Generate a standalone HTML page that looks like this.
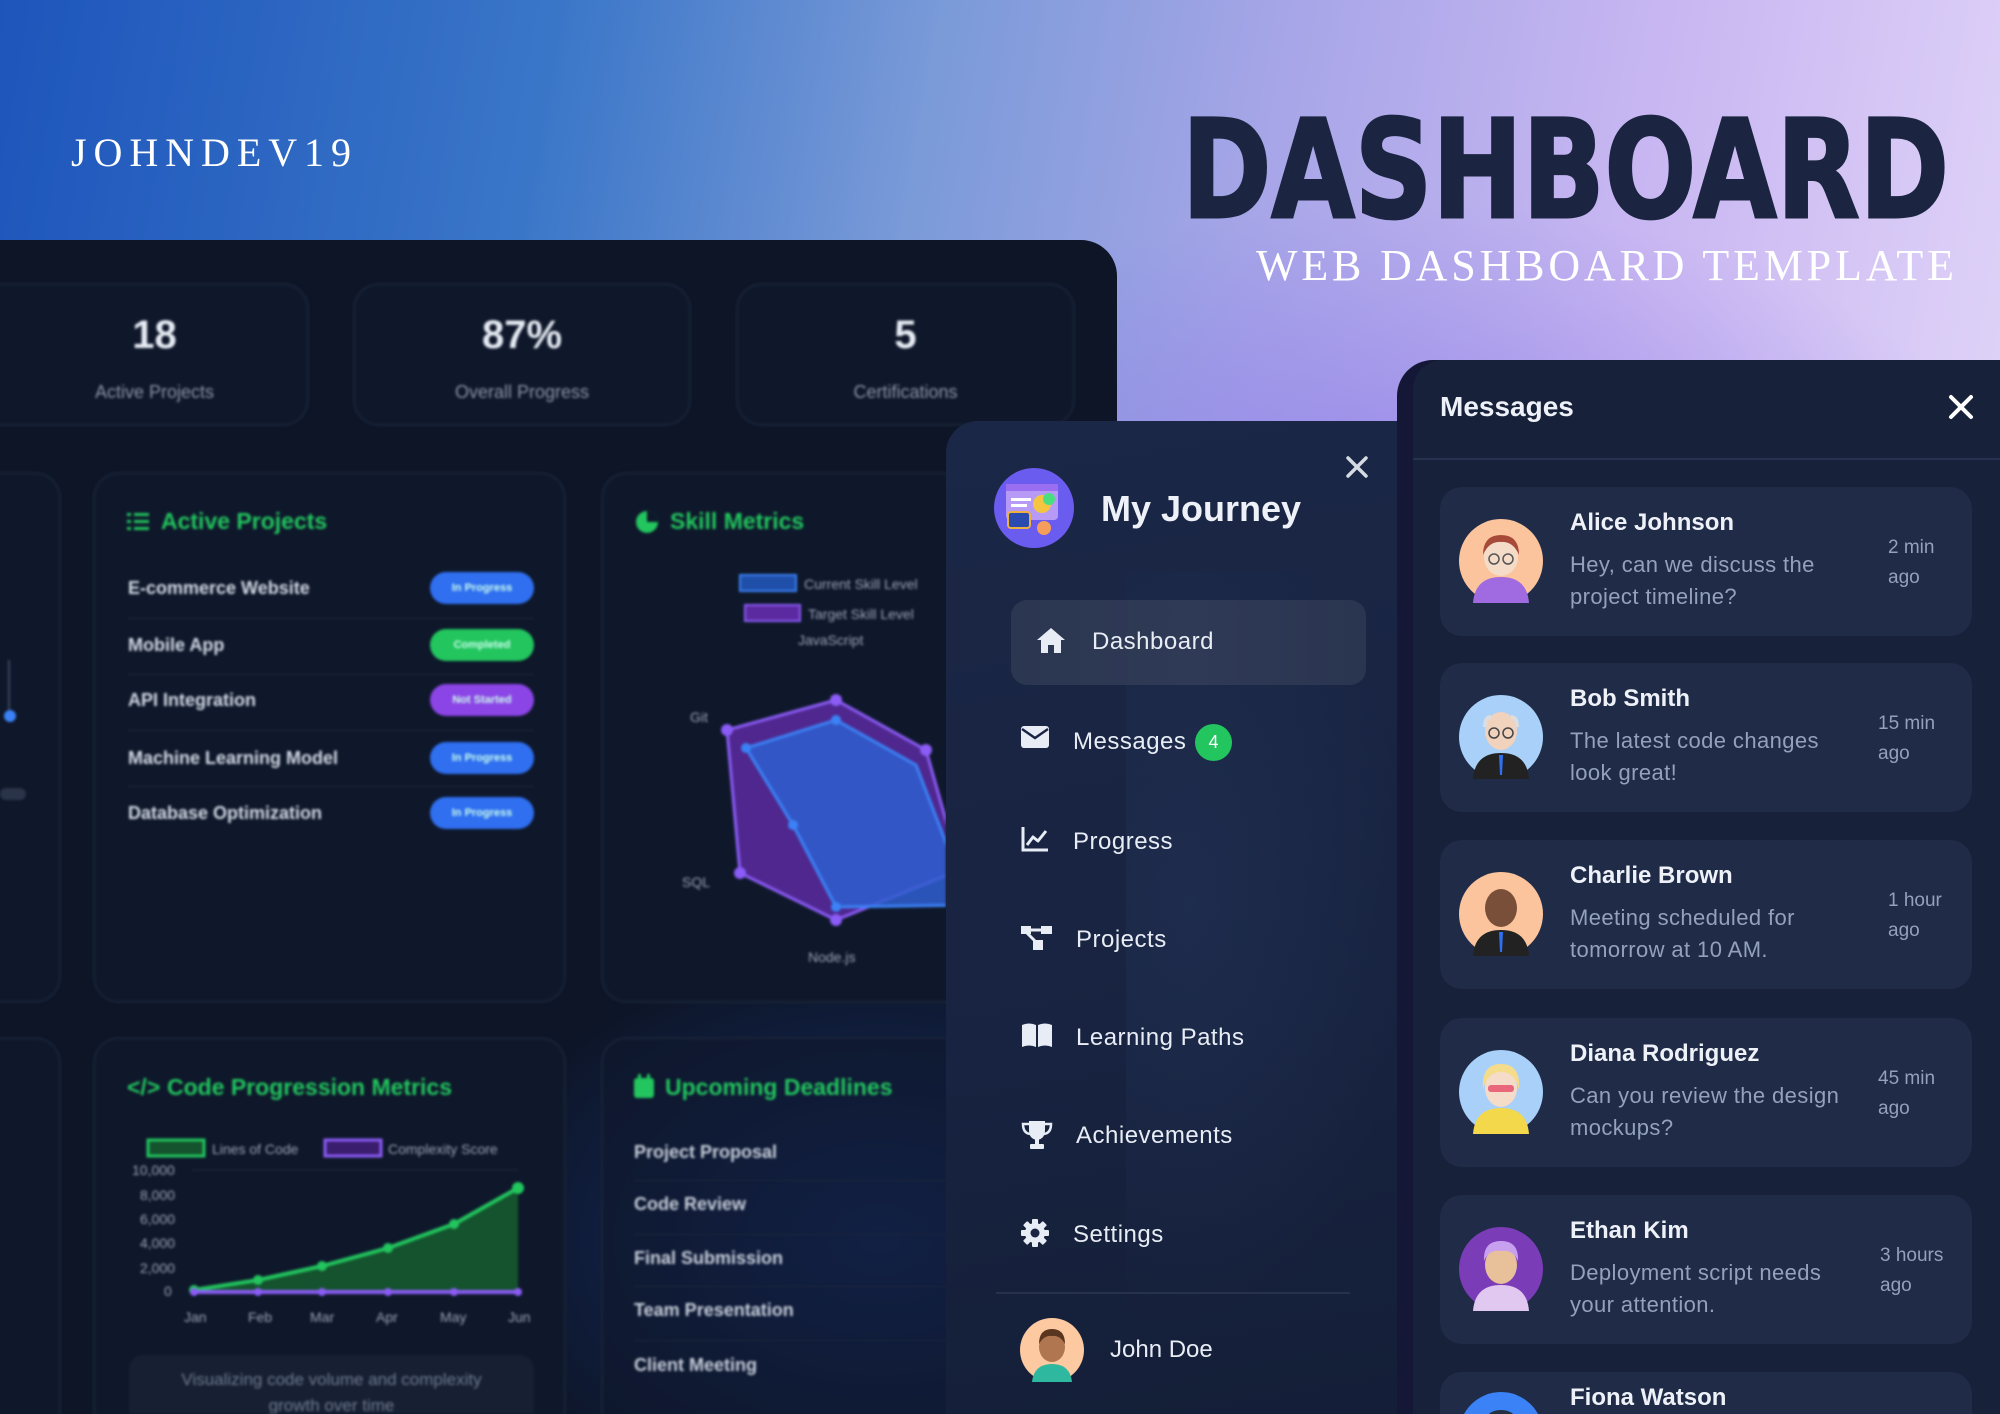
<!DOCTYPE html>
<html><head><meta charset="utf-8">
<style>
*{margin:0;padding:0;box-sizing:border-box}
html,body{width:2000px;height:1414px;overflow:hidden}
body{font-family:"Liberation Sans","DejaVu Sans",sans-serif;}
#wrap{position:relative;width:2000px;height:1414px;overflow:hidden;
background:linear-gradient(100deg,#1d55bb 0%,#3a76c8 25%,#7a9ad8 42%,#a8a6e8 58%,#c9b7f2 75%,#e8defa 100%);}
.bgshade{position:absolute;left:1000px;top:200px;width:1000px;height:500px;background:radial-gradient(ellipse at 40% 60%,rgba(130,110,230,.55),rgba(130,110,230,0) 70%)}
.abs{position:absolute}
#left{left:-40px;top:240px;width:1157px;height:1174px;border-radius:36px 36px 0 0;background:#0d1527;overflow:hidden}
#left .glow{position:absolute;left:500px;top:700px;width:700px;height:600px;background:radial-gradient(ellipse at 60% 50%,rgba(30,70,170,.5),rgba(30,70,170,0) 70%)}
.blur{filter:blur(1.2px)}
.card{position:absolute;border:2px solid #1a2438;border-radius:26px;background:#0f182b}
.stat{text-align:center;color:#e6ebf3}
.stat b{display:block;font-size:40px;margin-top:28px}
.stat span{display:block;font-size:18px;color:#8a94a8;margin-top:24px}
.ttl{position:absolute;color:#22c55e;font-weight:bold;font-size:23px}
.row{position:absolute;left:128px;width:406px;color:#d5dbe6;font-size:18px;font-weight:bold}
.pill{position:absolute;right:0;top:-6px;width:104px;height:32px;border-radius:16px;font-size:11px;color:#cfe;text-align:center;line-height:32px}
.sep{position:absolute;left:128px;width:406px;height:1px;background:#1f2a3e}
#side{left:946px;top:421px;width:500px;height:993px;border-radius:32px 32px 0 0;background:linear-gradient(170deg,#1b2746 0%,#172340 60%,#141e37 100%)}
.nav{position:absolute;color:#e8edf5;font-size:24px;letter-spacing:.5px}
.nav svg{position:absolute;left:0;top:-2px}
#msg{left:1397px;top:360px;width:603px;height:1054px;border-radius:36px 0 0 0;background:#141836}
#msgin{left:1413px;top:360px;width:587px;height:1054px;border-radius:30px 0 0 0;background:#17223a}
.mc{position:absolute;left:1440px;width:532px;height:149px;border-radius:22px;background:#1f2b47;overflow:hidden}
.mc .av{position:absolute;left:19px;top:32px}
.mc .nm{position:absolute;left:130px;top:22px;color:#eef2f8;font-weight:bold;font-size:24px}
.mc .tx{position:absolute;left:130px;top:62px;width:290px;color:#94a1bb;font-size:22px;line-height:32px;letter-spacing:.4px}
.mc .tm{position:absolute;left:438px;top:46px;width:70px;color:#94a1bb;font-size:19px;line-height:30px}
</style></head><body><div id="wrap">
<div class="bgshade"></div>

<svg class="abs" style="left:0;top:0" width="2000" height="300">
<text x="71" y="166" textLength="280" lengthAdjust="spacing" font-family="Liberation Serif" font-size="40" fill="#fff">JOHNDEV19</text>
<text x="1182" y="217" textLength="767" lengthAdjust="spacingAndGlyphs" font-family="DejaVu Sans" font-weight="bold" font-size="136" fill="#1b2541" stroke="#1b2541" stroke-width="3">DASHBOARD</text>
<text x="1256" y="280" textLength="698" lengthAdjust="spacing" font-family="Liberation Serif" font-size="44" fill="#fff">WEB DASHBOARD TEMPLATE</text>
</svg>

<div id="left" class="abs">
<div class="glow"></div>
<div class="blur">
<div class="card stat" style="left:0;top:43px;width:349px;height:143px;padding-left:40px"><b>18</b><span>Active Projects</span></div>
<div class="card stat" style="left:393px;top:43px;width:338px;height:143px"><b>87%</b><span>Overall Progress</span></div>
<div class="card stat" style="left:776px;top:43px;width:339px;height:143px"><b>5</b><span>Certifications</span></div>
<div class="card" style="left:0;top:232px;width:101px;height:531px"></div>
<div class="card" style="left:133px;top:232px;width:473px;height:531px"></div>
<div class="card" style="left:641px;top:232px;width:520px;height:531px"></div>
<div class="card" style="left:0;top:797px;width:101px;height:500px"></div>
<div class="card" style="left:133px;top:797px;width:473px;height:500px"></div>
<div class="card" style="left:641px;top:797px;width:520px;height:500px;background:rgba(15,24,43,.6)"></div>
</div>
</div>

<div class="abs blur" style="left:0;top:0;width:946px;height:1414px;overflow:hidden">
<div class="abs" style="left:4px;top:710px;width:12px;height:12px;border-radius:6px;background:#3b82f6"></div>
<div class="abs" style="left:8px;top:660px;width:2px;height:50px;background:#3a4560"></div>
<div class="abs" style="left:0;top:788px;width:26px;height:12px;border-radius:6px;background:#2a3448"></div>
<svg class="abs" style="left:127px;top:512px" width="22" height="20"><g fill="#22c55e"><rect x="0" y="1" width="4" height="3"/><rect x="7" y="1" width="15" height="3"/><rect x="0" y="8" width="4" height="3"/><rect x="7" y="8" width="15" height="3"/><rect x="0" y="15" width="4" height="3"/><rect x="7" y="15" width="15" height="3"/></g></svg>
<div class="ttl" style="left:161px;top:508px">Active Projects</div>
<div class="row" style="top:578px">E-commerce Website<div class="pill" style="background:#2f6ff0">In Progress</div></div>
<div class="sep" style="top:618px"></div>
<div class="row" style="top:635px">Mobile App<div class="pill" style="background:#22c55e">Completed</div></div>
<div class="sep" style="top:674px"></div>
<div class="row" style="top:690px">API Integration<div class="pill" style="background:#8b45e6">Not Started</div></div>
<div class="sep" style="top:730px"></div>
<div class="row" style="top:748px">Machine Learning Model<div class="pill" style="background:#2f6ff0">In Progress</div></div>
<div class="sep" style="top:786px"></div>
<div class="row" style="top:803px">Database Optimization<div class="pill" style="background:#2f6ff0">In Progress</div></div>

<svg class="abs" style="left:635px;top:510px" width="24" height="24"><circle cx="12" cy="12" r="11" fill="#22c55e"/><path d="M12 12 L12 1 A11 11 0 0 1 23 12Z" fill="#0f182b"/></svg>
<div class="ttl" style="left:670px;top:508px">Skill Metrics</div>
<svg class="abs" style="left:640px;top:560px" width="306" height="420" font-family="Liberation Sans" font-size="14" fill="#9aa3b5">
<rect x="100" y="15" width="56" height="16" fill="#1f4fa8" stroke="#3b82f6" stroke-width="2"/><text x="164" y="29">Current Skill Level</text>
<rect x="105" y="45" width="55" height="16" fill="#5b2aa0" stroke="#8b5cf6" stroke-width="2"/><text x="168" y="59">Target Skill Level</text>
<text x="158" y="85">JavaScript</text><text x="50" y="162">Git</text><text x="42" y="327">SQL</text><text x="168" y="402">Node.js</text>
<polygon points="196,140 286,190 320,310 196,360 100,313 87,170" fill="#5b2aa0" fill-opacity=".85" stroke="#8b5cf6" stroke-width="3"/>
<polygon points="196,160 276,205 330,345 196,347 153,265 106,188" fill="#2f5fd0" fill-opacity=".85" stroke="#3b82f6" stroke-width="3"/>
<g fill="#8b5cf6"><circle cx="196" cy="140" r="6"/><circle cx="87" cy="170" r="6"/><circle cx="100" cy="313" r="6"/><circle cx="196" cy="360" r="6"/><circle cx="286" cy="190" r="6"/></g>
<g fill="#3b82f6"><circle cx="196" cy="160" r="5"/><circle cx="106" cy="188" r="5"/><circle cx="153" cy="265" r="5"/><circle cx="196" cy="347" r="5"/></g>
</svg>

<div class="ttl" style="left:127px;top:1074px">&lt;/&gt;</div>
<div class="ttl" style="left:167px;top:1074px">Code Progression Metrics</div>
<svg class="abs" style="left:130px;top:1130px" width="420" height="200" font-family="Liberation Sans" font-size="14" fill="#9aa3b5">
<rect x="18" y="10" width="56" height="16" fill="#14532d" stroke="#22c55e" stroke-width="3"/><text x="82" y="24">Lines of Code</text>
<rect x="195" y="10" width="56" height="16" fill="#3b1d6e" stroke="#8b5cf6" stroke-width="3"/><text x="258" y="24">Complexity Score</text>
<text x="2" y="45">10,000</text><text x="10" y="70">8,000</text><text x="10" y="94">6,000</text><text x="10" y="118">4,000</text><text x="10" y="143">2,000</text><text x="34" y="166">0</text>
<line x1="62" y1="40" x2="388" y2="40" stroke="#222c40"/>
<path d="M64 160 L128 150 L192 136 L258 118 L324 94 L388 58 L388 162 L64 162Z" fill="#14532d"/>
<path d="M64 160 L128 150 L192 136 L258 118 L324 94 L388 58" fill="none" stroke="#22c55e" stroke-width="4"/>
<g fill="#22c55e"><circle cx="64" cy="160" r="5"/><circle cx="128" cy="150" r="5"/><circle cx="192" cy="136" r="5"/><circle cx="258" cy="118" r="5"/><circle cx="324" cy="94" r="5"/><circle cx="388" cy="58" r="6"/></g>
<line x1="64" y1="162" x2="388" y2="162" stroke="#8b5cf6" stroke-width="4"/>
<g fill="#8b5cf6"><circle cx="64" cy="162" r="4"/><circle cx="128" cy="162" r="4"/><circle cx="192" cy="162" r="4"/><circle cx="258" cy="162" r="4"/><circle cx="324" cy="162" r="4"/><circle cx="388" cy="162" r="4"/></g>
<text x="54" y="192">Jan</text><text x="118" y="192">Feb</text><text x="180" y="192">Mar</text><text x="246" y="192">Apr</text><text x="310" y="192">May</text><text x="378" y="192">Jun</text>
</svg>
<div class="abs" style="left:129px;top:1355px;width:405px;height:59px;border-radius:14px 14px 0 0;background:#172033;color:#6f7a8f;font-size:17px;text-align:center;padding-top:12px;line-height:26px;overflow:hidden">Visualizing code volume and complexity<br>growth over time</div>

<svg class="abs" style="left:634px;top:1074px" width="20" height="24"><rect x="0" y="4" width="20" height="20" rx="3" fill="#22c55e"/><rect x="4" y="0" width="3" height="6" fill="#22c55e"/><rect x="13" y="0" width="3" height="6" fill="#22c55e"/></svg>
<div class="ttl" style="left:665px;top:1074px">Upcoming Deadlines</div>
<div class="row" style="left:634px;top:1142px;color:#c9d0dc">Project Proposal</div>
<div class="row" style="left:634px;top:1194px;color:#c9d0dc">Code Review</div>
<div class="row" style="left:634px;top:1248px;color:#c9d0dc">Final Submission</div>
<div class="row" style="left:634px;top:1300px;color:#c9d0dc">Team Presentation</div>
<div class="row" style="left:634px;top:1355px;color:#c9d0dc">Client Meeting</div>
<div class="sep" style="left:634px;top:1180px;width:320px"></div>
<div class="sep" style="left:634px;top:1234px;width:320px"></div>
<div class="sep" style="left:634px;top:1286px;width:320px"></div>
<div class="sep" style="left:634px;top:1340px;width:320px"></div>
</div>

<div id="side" class="abs">
<div class="abs" style="left:180px;top:150px;width:320px;height:840px;background:radial-gradient(ellipse at 20% 40%,rgba(60,80,130,.18),rgba(0,0,0,0) 60%)"></div>
</div>
<svg class="abs" style="left:994px;top:468px" width="80" height="80"><circle cx="40" cy="40" r="40" fill="#6b5cf0"/><rect x="12" y="16" width="52" height="36" rx="4" fill="#b69af5"/><rect x="12" y="16" width="52" height="7" fill="#9a6ef0"/><rect x="17" y="30" width="20" height="3" fill="#fff"/><rect x="17" y="36" width="16" height="3" fill="#fff"/><circle cx="48" cy="36" r="9" fill="#f5c542"/><circle cx="55" cy="31" r="6" fill="#4ade80"/><rect x="14" y="44" width="22" height="16" rx="3" fill="#2a4bb0" stroke="#f0b040" stroke-width="2"/><circle cx="50" cy="60" r="7" fill="#f59e5b"/></svg>
<div class="abs" style="left:1101px;top:488px;color:#eef2f8;font-weight:bold;font-size:36px">My Journey</div>
<svg class="abs" style="left:1345px;top:455px" width="24" height="24"><path d="M3 3L21 21M21 3L3 21" stroke="#d5dae3" stroke-width="3.5" stroke-linecap="round"/></svg>

<div class="abs" style="left:1011px;top:600px;width:355px;height:85px;border-radius:16px;background:linear-gradient(90deg,#2b3650,#2f3a56 50%,#2a3550)"></div>
<div class="nav" style="left:1036px;top:628px"><svg width="30" height="28" viewBox="0 0 30 28"><path d="M15 2 L29 14 L25 14 L25 27 L18 27 L18 19 L12 19 L12 27 L5 27 L5 14 L1 14Z" fill="#e8edf5"/></svg><span style="margin-left:56px">Dashboard</span></div>
<div class="nav" style="left:1021px;top:728px"><svg width="28" height="22" viewBox="0 0 28 22"><rect x="0" y="0" width="28" height="22" rx="3" fill="#e8edf5"/><path d="M1 3 L14 12 L27 3" stroke="#1a2543" stroke-width="2.5" fill="none"/></svg><span style="margin-left:52px">Messages</span></div>
<div class="abs" style="left:1195px;top:724px;width:37px;height:37px;border-radius:50%;background:#22c55e;color:#fff;font-size:18px;text-align:center;line-height:37px">4</div>
<div class="nav" style="left:1021px;top:828px"><svg width="28" height="26" viewBox="0 0 28 26"><path d="M2 1 L2 24 L27 24" stroke="#e8edf5" stroke-width="3" fill="none"/><path d="M6 19 L12 11 L17 15 L25 5" stroke="#e8edf5" stroke-width="3" fill="none" stroke-linejoin="round"/></svg><span style="margin-left:52px">Progress</span></div>
<div class="nav" style="left:1021px;top:926px"><svg width="32" height="28" viewBox="0 0 32 28"><rect x="0" y="2" width="10" height="8" fill="#e8edf5"/><rect x="20" y="2" width="11" height="8" fill="#e8edf5"/><rect x="12" y="16" width="10" height="10" fill="#e8edf5"/><path d="M8 6 L22 6 M6 9 L16 19" stroke="#e8edf5" stroke-width="3"/></svg><span style="margin-left:55px">Projects</span></div>
<div class="nav" style="left:1021px;top:1024px"><svg width="32" height="26" viewBox="0 0 32 26"><path d="M1 3 Q8 0 15 3 L15 25 Q8 22 1 25Z M17 3 Q24 0 31 3 L31 25 Q24 22 17 25Z" fill="#e8edf5"/></svg><span style="margin-left:55px">Learning Paths</span></div>
<div class="nav" style="left:1021px;top:1122px"><svg width="32" height="30" viewBox="0 0 32 30"><path d="M8 1 L24 1 L24 10 Q24 19 16 20 Q8 19 8 10Z" fill="#e8edf5"/><path d="M8 4 L2 4 Q2 13 9 14 M24 4 L30 4 Q30 13 23 14" stroke="#e8edf5" stroke-width="2.5" fill="none"/><rect x="14" y="19" width="4" height="5" fill="#e8edf5"/><rect x="9" y="24" width="14" height="5" rx="1" fill="#e8edf5"/></svg><span style="margin-left:55px">Achievements</span></div>
<div class="nav" style="left:1021px;top:1221px"><svg width="28" height="28" viewBox="0 0 28 28"><g fill="#e8edf5"><circle cx="14" cy="14" r="10"/><rect x="11" y="0" width="6" height="28" rx="1"/><rect x="0" y="11" width="28" height="6" rx="1"/><rect x="11" y="0" width="6" height="28" rx="1" transform="rotate(45 14 14)"/><rect x="11" y="0" width="6" height="28" rx="1" transform="rotate(-45 14 14)"/></g><circle cx="14" cy="14" r="4.5" fill="#1a2543"/></svg><span style="margin-left:52px">Settings</span></div>
<div class="abs" style="left:996px;top:1292px;width:354px;height:2px;background:#26324c"></div>
<svg class="abs" style="left:1020px;top:1318px" width="64" height="64"><circle cx="32" cy="32" r="32" fill="#fcc9a0"/><path d="M12 64 Q14 46 32 46 Q50 46 52 64Z" fill="#2fb8a0"/><ellipse cx="32" cy="29" rx="13" ry="15" fill="#b07650"/><path d="M19 26 Q19 11 32 11 Q45 11 45 26 Q40 17 32 18 Q24 17 19 26Z" fill="#5a3520"/></svg>
<div class="abs" style="left:1110px;top:1336px;color:#e8edf5;font-size:24px">John Doe</div>

<div id="msg" class="abs"></div>
<div id="msgin" class="abs"></div>
<div class="abs" style="left:1440px;top:391px;color:#eef2f8;font-weight:bold;font-size:28px">Messages</div>
<svg class="abs" style="left:1948px;top:394px" width="26" height="26"><path d="M3 3L23 23M23 3L3 23" stroke="#fff" stroke-width="4" stroke-linecap="round"/></svg>
<div class="abs" style="left:1413px;top:458px;width:587px;height:2px;background:#263250"></div>

<div class="mc" style="top:487px"><svg class="av" width="84" height="84"><circle cx="42" cy="42" r="42" fill="#fcc49c"/><path d="M14 84 Q16 58 42 58 Q68 58 70 84Z" fill="#a06ae0"/><ellipse cx="42" cy="38" rx="17" ry="19" fill="#f4dcc8"/><path d="M24 36 Q24 16 42 16 Q60 16 60 36 Q54 22 42 23 Q30 22 24 36Z" fill="#a84a3a"/><circle cx="35" cy="40" r="5" fill="none" stroke="#555" stroke-width="1.5"/><circle cx="49" cy="40" r="5" fill="none" stroke="#555" stroke-width="1.5"/></svg>
<div class="nm">Alice Johnson</div><div class="tx">Hey, can we discuss the project timeline?</div><div class="tm" style="left:448px">2 min ago</div></div>

<div class="mc" style="top:663px"><svg class="av" width="84" height="84"><circle cx="42" cy="42" r="42" fill="#a8d0f8"/><path d="M14 84 Q16 58 42 58 Q68 58 70 84Z" fill="#222"/><path d="M40 60 L44 60 L43 80 L41 80Z" fill="#2f6ff0"/><ellipse cx="42" cy="36" rx="16" ry="19" fill="#f0d2bd"/><path d="M26 32 Q26 22 32 22 M58 32 Q58 22 52 22" stroke="#ddd" stroke-width="4" fill="none"/><circle cx="35" cy="38" r="5" fill="none" stroke="#444" stroke-width="1.5"/><circle cx="49" cy="38" r="5" fill="none" stroke="#444" stroke-width="1.5"/></svg>
<div class="nm">Bob Smith</div><div class="tx">The latest code changes look great!</div><div class="tm">15 min ago</div></div>

<div class="mc" style="top:840px"><svg class="av" width="84" height="84"><circle cx="42" cy="42" r="42" fill="#fcc49c"/><path d="M14 84 Q16 58 42 58 Q68 58 70 84Z" fill="#222"/><path d="M40 60 L44 60 L43 80 L41 80Z" fill="#2f6ff0"/><ellipse cx="42" cy="36" rx="16" ry="19" fill="#7a4f3a"/></svg>
<div class="nm">Charlie Brown</div><div class="tx">Meeting scheduled for tomorrow at 10 AM.</div><div class="tm" style="left:448px">1 hour ago</div></div>

<div class="mc" style="top:1018px"><svg class="av" width="84" height="84"><circle cx="42" cy="42" r="42" fill="#a8d0f8"/><path d="M14 84 Q16 58 42 58 Q68 58 70 84Z" fill="#f2d84a"/><ellipse cx="42" cy="38" rx="16" ry="19" fill="#f4dcc8"/><path d="M24 40 Q22 14 42 14 Q62 14 60 40 Q56 22 42 22 Q28 22 24 40Z" fill="#f5dc8a"/><rect x="29" y="35" width="26" height="7" rx="3" fill="#e9677a"/></svg>
<div class="nm">Diana Rodriguez</div><div class="tx">Can you review the design mockups?</div><div class="tm">45 min ago</div></div>

<div class="mc" style="top:1195px"><svg class="av" width="84" height="84"><circle cx="42" cy="42" r="42" fill="#7b3cb8"/><path d="M14 84 Q16 58 42 58 Q68 58 70 84Z" fill="#e0c8f0"/><ellipse cx="42" cy="38" rx="16" ry="19" fill="#e8c09a"/><path d="M25 34 Q24 14 42 14 Q60 14 59 34 Q54 22 42 24 Q30 22 25 34Z" fill="#c8a0f0"/></svg>
<div class="nm">Ethan Kim</div><div class="tx">Deployment script needs your attention.</div><div class="tm" style="left:440px">3 hours ago</div></div>

<div class="mc" style="top:1372px;height:42px;border-radius:22px 22px 0 0"><svg class="av" width="84" height="84" style="top:20px"><circle cx="42" cy="42" r="42" fill="#3b82f6"/><path d="M24 40 Q24 18 42 18 Q60 18 60 40Z" fill="#243040"/></svg>
<div class="nm" style="top:12px">Fiona Watson</div></div>
</div></body></html>
